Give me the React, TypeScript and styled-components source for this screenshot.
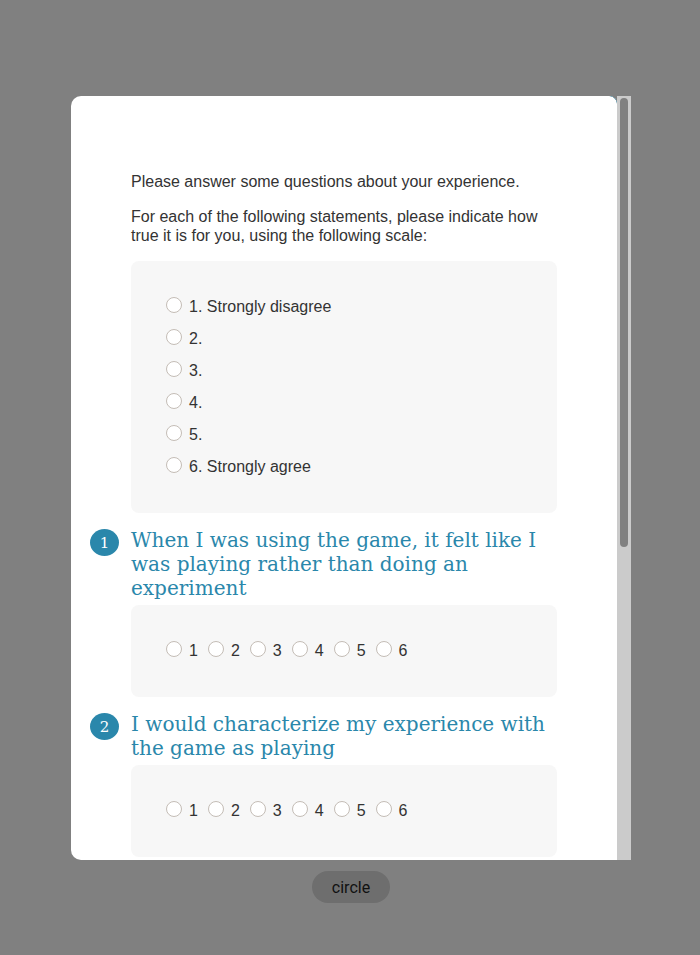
import styled, { createGlobalStyle } from "styled-components";

const GlobalStyle = createGlobalStyle`
  html, body {
    margin: 0;
    padding: 0;
    background: #808080;
  }
`;

const Page = styled.div`
  min-height: 955px;
  display: flex;
  flex-direction: column;
  align-items: center;
  padding-top: 96px;
  box-sizing: border-box;
  padding-left: 2px;
`;

const Modal = styled.div`
  width: 560px;
  height: 764px;
  display: flex;
`;

const Panel = styled.div`
  position: relative;
  flex: 1;
  background: #fff;
  border-radius: 10px 8px 0 10px;
  overflow: hidden;
  padding: 76px 60px 0 60px;
  font-family: "Liberation Sans", Arial, sans-serif;
  font-size: 16px;
  color: #333;

  &::after {
    content: "";
    position: absolute;
    top: 0;
    right: 0;
    width: 8px;
    height: 8px;
    background: radial-gradient(circle at 0 100%, transparent 7.5px, #2a87ab 8px);
  }
`;

const Track = styled.div`
  width: 14px;
  background: #cbcbcb;
  padding: 2px 3px;
  box-sizing: border-box;
`;

const Thumb = styled.div`
  width: 8px;
  height: 449px;
  border-radius: 4px;
  background: #808080;
`;

const Intro = styled.p`
  margin: 0 0 16px;
  line-height: 19px;
`;

const Box = styled.div<{ $inline?: boolean }>`
  background: #f7f7f7;
  border-radius: 8px;
  padding: 30px 35px;
  display: flex;
  flex-direction: ${(p) => (p.$inline ? "row" : "column")};
`;

const Option = styled.label<{ $inline?: boolean }>`
  display: flex;
  align-items: center;
  height: 32px;
  margin-right: ${(p) => (p.$inline ? "10px" : "0")};
  color: #333;
`;

const Radio = styled.span`
  width: 16px;
  height: 16px;
  box-sizing: border-box;
  border: 1px solid #c4bdb6;
  border-radius: 50%;
  background: #fff;
  margin-right: 7px;
  position: relative;
  top: -2px;
`;

const Question = styled.div`
  position: relative;
  margin-top: 15px;
`;

const Title = styled.h3`
  margin: 0 0 5px;
  font-family: "DejaVu Serif", serif;
  font-weight: normal;
  font-size: 20px;
  line-height: 24px;
  color: #2a87ab;
`;

const Num = styled.span`
  position: absolute;
  left: -41px;
  top: 1px;
  width: 29px;
  height: 27px;
  border-radius: 50%;
  background: #2a87ab;
  color: #fff;
  font-family: "DejaVu Serif", serif;
  font-size: 15px;
  display: flex;
  align-items: center;
  justify-content: center;
`;

const CircleButton = styled.button`
  margin-top: 11px;
  height: 32px;
  padding: 0 20px;
  border: none;
  border-radius: 16px;
  background: #6e6e6e;
  color: #111;
  font-family: Roboto, "Liberation Sans", sans-serif;
  font-size: 16px;
`;

const scale = [
  "1. Strongly disagree",
  "2.",
  "3.",
  "4.",
  "5.",
  "6. Strongly agree",
];

const questions = [
  "When I was using the game, it felt like I was playing rather than doing an experiment",
  "I would characterize my experience with the game as playing",
];

export default function App() {
  return (
    <>
      <GlobalStyle />
      <Page>
        <Modal>
          <Panel>
            <Intro>Please answer some questions about your experience.</Intro>
            <Intro>
              For each of the following statements, please indicate how true it
              is for you, using the following scale:
            </Intro>
            <Box>
              {scale.map((s) => (
                <Option key={s}>
                  <Radio />
                  {s}
                </Option>
              ))}
            </Box>
            {questions.map((q, i) => (
              <Question key={q}>
                <Num>{i + 1}</Num>
                <Title>{q}</Title>
                <Box $inline>
                  {[1, 2, 3, 4, 5, 6].map((n) => (
                    <Option key={n} $inline>
                      <Radio />
                      {n}
                    </Option>
                  ))}
                </Box>
              </Question>
            ))}
          </Panel>
          <Track>
            <Thumb />
          </Track>
        </Modal>
        <CircleButton>circle</CircleButton>
      </Page>
    </>
  );
}
